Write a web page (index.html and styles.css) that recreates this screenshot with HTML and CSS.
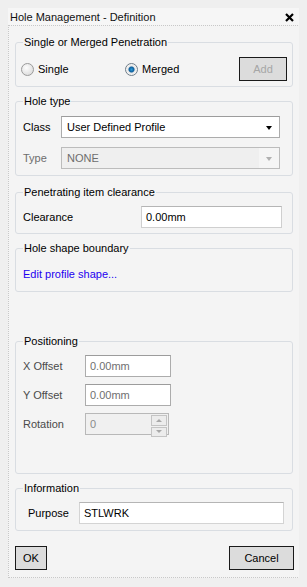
FILE: index.html
```html
<!DOCTYPE html>
<html lang="en">
<head>
    <meta charset="UTF-8">
    <meta name="viewport" content="width=device-width, initial-scale=1.0">
    <title>Hole Management - Definition</title>
    <link rel="stylesheet" href="styles.css">
</head>
<body>
    <div class="dialog">
        <div class="titlebar">
            <span class="title">Hole Management - Definition</span>
            <svg class="close" width="9" height="9" viewBox="0 0 9 9"><path d="M1 1L8 8M8 1L1 8" stroke="#000" stroke-width="2.2"/></svg>
        </div>
        <div class="content">
            <fieldset class="group group-mode">
                <legend>Single or Merged Penetration</legend>
                <div class="row">
                    <label class="radio"><span class="radio-mark"></span>Single</label>
                    <label class="radio radio-on"><span class="radio-mark"></span>Merged</label>
                    <button class="btn btn-add" disabled>Add</button>
                </div>
            </fieldset>

            <fieldset class="group group-type">
                <legend>Hole type</legend>
                <div class="field">
                    <span class="field-label">Class</span>
                    <div class="select select-class">User Defined Profile<span class="select-arrow"></span></div>
                </div>
                <div class="field">
                    <span class="field-label muted">Type</span>
                    <div class="select select-class select-disabled">NONE<span class="select-arrow"></span></div>
                </div>
            </fieldset>

            <fieldset class="group group-clear">
                <legend>Penetrating item clearance</legend>
                <div class="field">
                    <span class="field-label label-clear">Clearance</span>
                    <div class="textbox textbox-clear">0.00mm</div>
                </div>
            </fieldset>

            <fieldset class="group group-shape">
                <legend>Hole shape boundary</legend>
                <div class="field">
                    <a class="link" href="#">Edit profile shape...</a>
                </div>
            </fieldset>

            <fieldset class="group group-pos">
                <legend>Positioning</legend>
                <div class="field">
                    <span class="field-label label-pos">X Offset</span>
                    <div class="textbox textbox-pos">0.00mm</div>
                </div>
                <div class="field">
                    <span class="field-label label-pos">Y Offset</span>
                    <div class="textbox textbox-pos">0.00mm</div>
                </div>
                <div class="field">
                    <span class="field-label label-pos">Rotation</span>
                    <div class="textbox textbox-rot">0
                        <span class="spin">
                            <span class="spin-btn"><span class="spin-up"></span></span>
                            <span class="spin-btn"><span class="spin-down"></span></span>
                        </span>
                    </div>
                </div>
            </fieldset>

            <fieldset class="group group-info">
                <legend>Information</legend>
                <div class="field">
                    <span class="field-label label-info">Purpose</span>
                    <div class="textbox textbox-info">STLWRK</div>
                </div>
            </fieldset>

            <div class="actions">
                <button class="btn btn-ok">OK</button>
                <button class="btn btn-cancel">Cancel</button>
            </div>
        </div>
    </div>
</body>
</html>
```

FILE: styles.css
```css
/**
 * Page and dialog frame
 */
body {
    margin: 8px;
    background: #efefef;
    font-family: "Liberation Sans", Arial, sans-serif;
    font-size: 11px;
    color: #000;
}

.dialog {
    width: 292px;
    background: #f4f4f4;
}

.titlebar {
    height: 17px;
    display: flex;
    align-items: center;
    justify-content: space-between;
    padding: 0 6px 0 2px;
    background: #f6f6f6;
}

.title {
    font-size: 11px;
    color: #111;
}

.close {
    margin-top: 1px;
}

.content {
    display: flex;
    flex-direction: column;
    gap: 7px;
    border: 1px dotted #c8c8c8;
    padding: 9px 6px 7px 6px;
}

/**
 * Group boxes
 */
.group {
    margin: 0;
    padding: 0;
    border: 1px solid #d9dde2;
    border-radius: 3px;
    min-width: 0;
}

.group legend {
    margin-left: 7px;
    padding: 0 1px;
    line-height: 15px;
    height: 15px;
}

.group-mode { padding: 7px 0 5px 0; }
.group-type { padding: 7px 0 6px 0; }
.group-clear { padding: 6px 0 5px 0; margin-top: 2px; }
.group-shape { padding: 7px 0 6px 0; }
.group-pos { padding: 6px 0 38px 0; margin-top: 35px; }
.group-info { padding: 6px 0 6px 0; }

.row {
    display: flex;
    align-items: center;
    padding: 0 5px;
    height: 24px;
}

.field {
    display: flex;
    align-items: center;
    height: 22px;
    padding-left: 7px;
}

.field + .field {
    margin-top: 9px;
}

.group-pos .field + .field {
    margin-top: 7px;
}

.field-label {
    width: 38px;
}

.muted { color: #6d6d6d; }
.label-clear { width: 118px; }
.label-pos { width: 62px; color: #4a4a4a; }
.label-info { width: 51px; padding-left: 5px; }

/**
 * Radio buttons
 */
.radio {
    display: flex;
    align-items: center;
    gap: 4px;
    width: 104px;
}

.radio-mark {
    width: 11px;
    height: 11px;
    border: 1px solid #9a9a9a;
    border-radius: 50%;
    background: radial-gradient(circle at 40% 35%, #fdfdfd, #d4d4d4);
    box-sizing: content-box;
}

.radio-on .radio-mark {
    background: radial-gradient(circle, #2b9ad8 0, #0f5f9c 2.5px, #e6e6e6 3.5px, #fafafa 6px);
    border-color: #6f7d88;
}

/**
 * Inputs
 */
.select,
.textbox {
    box-sizing: border-box;
    height: 22px;
    display: flex;
    align-items: center;
    position: relative;
    padding-left: 4px;
    background: #fff;
    border: 1px solid #acacac;
    border-top-color: #9c9c9c;
}

.select-class {
    width: 219px;
    padding-left: 5px;
}

.select-arrow {
    position: absolute;
    right: 7px;
    top: 9px;
    border-left: 3.5px solid transparent;
    border-right: 3.5px solid transparent;
    border-top: 4px solid #000;
}

.select-disabled {
    color: #6d6d6d;
    background: linear-gradient(to right, #efefef 197px, #f5f5f5 197px);
    border-color: #bcbcbc;
}

.select-disabled .select-arrow {
    border-top-color: #b0b0b0;
}

.textbox-clear { width: 141px; border-color: #cfcfcf; border-top-color: #b5b5b5; }
.textbox-pos { width: 86px; color: #707070; }
.textbox-info { width: 205px; border-color: #d4d4d4; border-top-color: #b5b5b5; }

.textbox-rot {
    width: 84px;
    color: #8a8a8a;
    background: #f0f0f0;
    border-color: #b8b8b8;
}

.spin {
    position: absolute;
    right: 1px;
    top: 1px;
    display: flex;
    flex-direction: column;
    gap: 1px;
}

.spin-btn {
    width: 14px;
    height: 8.5px;
    border: 1px solid #c4c4c4;
    background: #ececec;
    display: flex;
    align-items: center;
    justify-content: center;
    box-sizing: content-box;
}

.spin-up,
.spin-down {
    border-left: 3px solid transparent;
    border-right: 3px solid transparent;
}

.spin-up { border-bottom: 3px solid #a8a8a8; }
.spin-down { border-top: 3px solid #a8a8a8; }

.link {
    color: #2200f0;
    text-decoration: none;
}

/**
 * Buttons
 */
.btn {
    box-sizing: border-box;
    height: 24px;
    font-family: inherit;
    font-size: 11px;
    color: #000;
    background: #dcdcdc;
    border: 1px solid #1a1a1a;
    border-radius: 0;
    padding: 0;
}

.btn-add {
    width: 48px;
    margin-left: auto;
    color: #a6a6a6;
}

.actions {
    display: flex;
    justify-content: space-between;
    margin-top: 8px;
    margin-right: -1px;
}

.btn-ok { width: 32px; }
.btn-cancel { width: 65px; }
```
